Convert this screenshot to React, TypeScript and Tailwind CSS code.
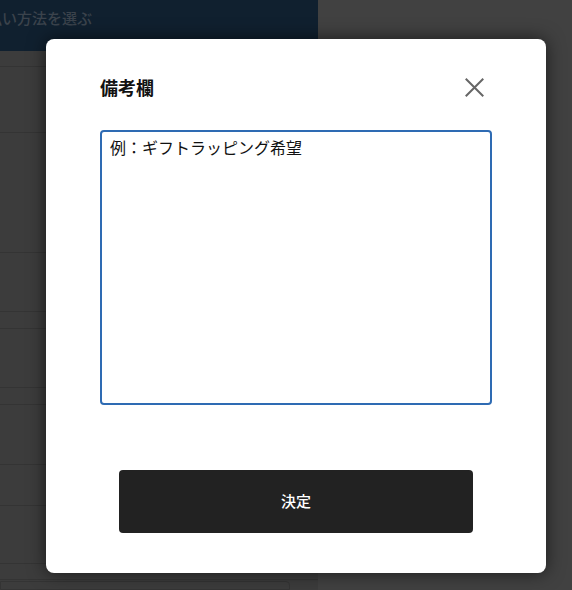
import { useState } from 'react';

const rowHeights = [16, 66, 120, 59, 17, 59, 17, 60, 41, 58, 16];

export default function App() {
  const [memo, setMemo] = useState('');

  return (
    <div
      className="relative h-[590px] w-[572px] overflow-hidden bg-[#414141]"
      style={{ fontFamily: '"Noto Sans CJK JP", "Noto Sans", sans-serif' }}
    >
      {/* 背景のページ（暗くなっている） */}
      <div className="flex h-full">
        <div className="flex w-[318px] flex-col bg-[#3c3c3c]">
          <div className="h-[51px] shrink-0 overflow-hidden bg-[#10202f] pt-[7px]">
            <p className="ml-[-43px] whitespace-nowrap text-[15px] font-medium text-[#3b434c]">
              お支払い方法を選ぶ
            </p>
          </div>
          {rowHeights.map((h, i) => (
            <div
              key={i}
              className="shrink-0 border-b border-[#343434]"
              style={{ height: h }}
            />
          ))}
          <div className="mr-[28px] mt-px h-[40px] rounded-tr-[4px] border border-[#343434]" />
        </div>
        <div className="flex-1" />
      </div>

      {/* モーダル */}
      <div className="absolute left-[46px] top-[39px] flex h-[534px] w-[500px] flex-col rounded-[8px] bg-white px-[54px] pt-[35px] shadow-[0_0_18px_rgba(0,0,0,0.6)]">
        <div className="flex h-[26px] items-center justify-between">
          <h2 className="text-[18px] font-bold text-[#111]">備考欄</h2>
          <button className="mr-[6px] flex h-[24px] w-[24px] items-center justify-center text-[#666]">
            <svg width="21" height="21" viewBox="0 0 24 24" fill="none" stroke="currentColor" strokeWidth="2.3">
              <path d="M2 2 L22 22 M22 2 L2 22" />
            </svg>
          </button>
        </div>
        <textarea
          value={memo}
          onChange={(e) => setMemo(e.target.value)}
          placeholder="例：ギフトラッピング希望"
          className="mt-[30px] h-[275px] w-full resize-none rounded-[4px] border-2 border-[#2e6bb3] px-[8px] py-[3px] text-[16px] leading-[24px] text-[#111] outline-none placeholder:text-[#111]"
        />
        <button className="mx-[19px] mt-[65px] h-[63px] rounded-[4px] bg-[#222] text-[15px] font-medium text-white">
          決定
        </button>
      </div>
    </div>
  );
}
